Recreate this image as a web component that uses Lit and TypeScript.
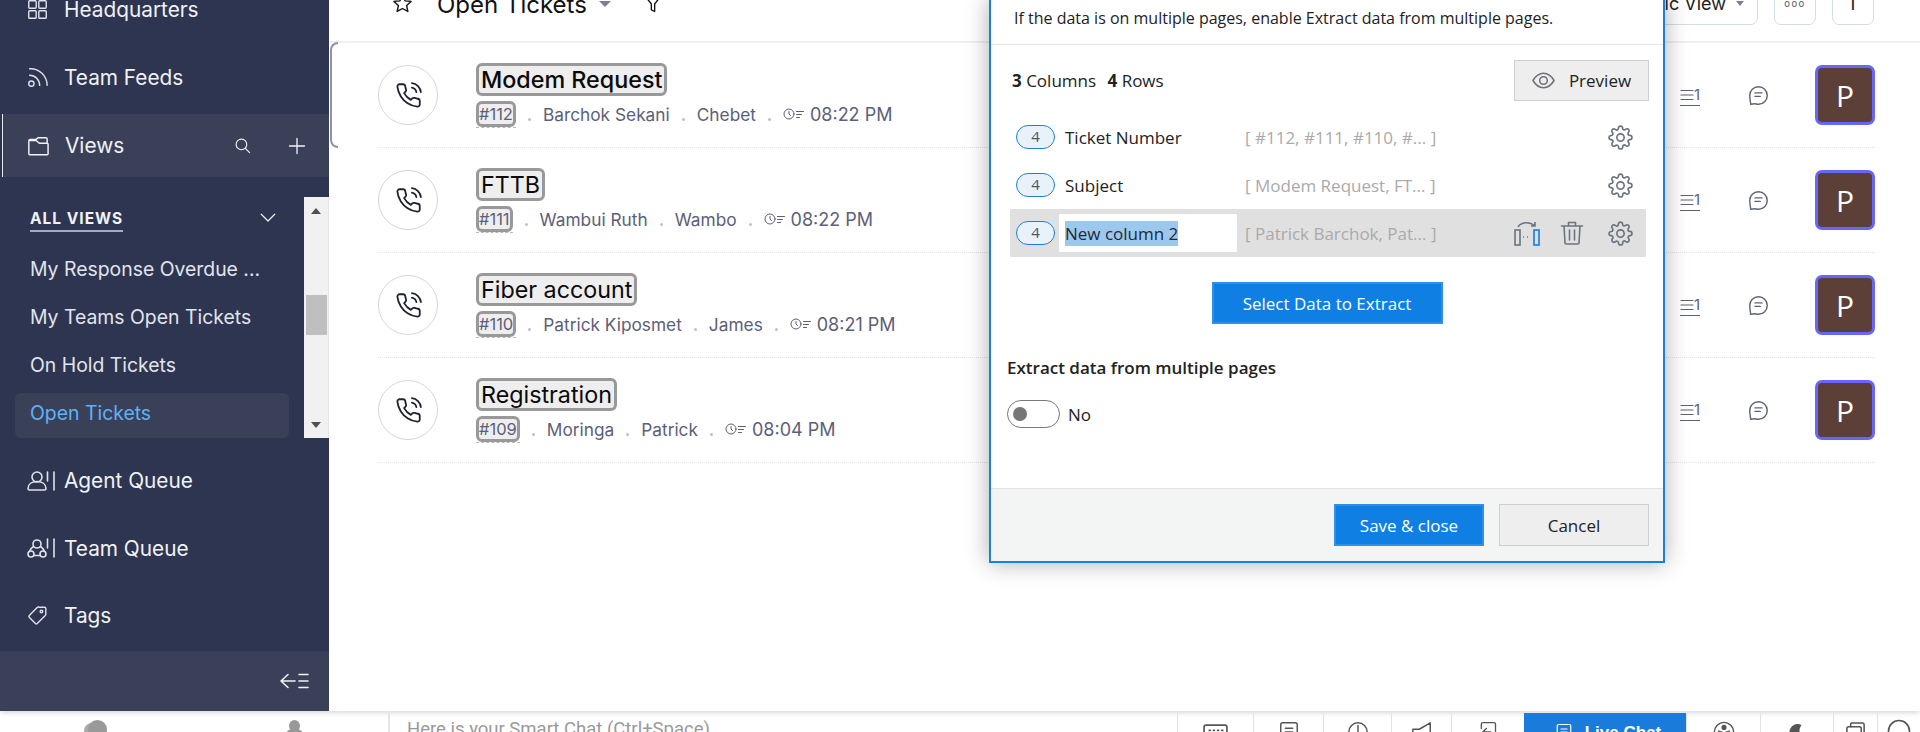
import { LitElement, html, css, svg } from 'lit';
import { customElement } from 'lit/decorators.js';

const tickets = [
  { title: 'Modem Request', id: '#112', contact: 'Barchok Sekani', agent: 'Chebet', time: '08:22 PM', active: true },
  { title: 'FTTB', id: '#111', contact: 'Wambui Ruth', agent: 'Wambo', time: '08:22 PM', active: false },
  { title: 'Fiber account', id: '#110', contact: 'Patrick Kiposmet', agent: 'James', time: '08:21 PM', active: false },
  { title: 'Registration', id: '#109', contact: 'Moringa', agent: 'Patrick', time: '08:04 PM', active: false },
];

const views = ['My Response Overdue ...', 'My Teams Open Tickets', 'On Hold Tickets', 'Open Tickets'];

const columns = [
  { name: 'Ticket Number', sample: '[ #112, #111, #110, #... ]' },
  { name: 'Subject', sample: '[ Modem Request, FT... ]' },
  { name: 'New column 2', sample: '[ Patrick Barchok, Pat... ]', editing: true },
];

const gearPath =
  'M19.4 15a1.65 1.65 0 0 0 .33 1.82l.06.06a2 2 0 0 1 0 2.83 2 2 0 0 1-2.83 0l-.06-.06a1.65 1.65 0 0 0-1.82-.33 1.65 1.65 0 0 0-1 1.51V21a2 2 0 0 1-2 2 2 2 0 0 1-2-2v-.09A1.65 1.65 0 0 0 9 19.4a1.65 1.65 0 0 0-1.82.33l-.06.06a2 2 0 0 1-2.83 0 2 2 0 0 1 0-2.83l.06-.06a1.65 1.65 0 0 0 .33-1.82 1.65 1.65 0 0 0-1.51-1H3a2 2 0 0 1-2-2 2 2 0 0 1 2-2h.09A1.65 1.65 0 0 0 4.6 9a1.65 1.65 0 0 0-.33-1.82l-.06-.06a2 2 0 0 1 0-2.83 2 2 0 0 1 2.83 0l.06.06a1.65 1.65 0 0 0 1.82.33H9a1.65 1.65 0 0 0 1-1.51V3a2 2 0 0 1 2-2 2 2 0 0 1 2 2v.09a1.65 1.65 0 0 0 1 1.51 1.65 1.65 0 0 0 1.82-.33l.06-.06a2 2 0 0 1 2.83 0 2 2 0 0 1 0 2.83l-.06.06a1.65 1.65 0 0 0-.33 1.82V9a1.65 1.65 0 0 0 1.51 1H21a2 2 0 0 1 2 2 2 2 0 0 1-2 2h-.09a1.65 1.65 0 0 0-1.51 1z';

// most icons sit on a 24 box and take their colour from currentColor
const icon = (body: unknown, size = 24, w = 24, h = 24, weight = 1.6) => html`<svg
  width=${(size * w) / 24}
  height=${(size * h) / 24}
  viewBox="0 0 ${w} ${h}"
  fill="none"
  stroke="currentColor"
  stroke-width=${weight}
  stroke-linecap="round"
  stroke-linejoin="round"
>${body}</svg>`;

const icons = {
  grid: svg`<rect x="2" y="2" width="8.5" height="8.5" rx="1"/><rect x="13.5" y="2" width="8.5" height="8.5" rx="1"/><rect x="2" y="13.5" width="8.5" height="8.5" rx="1"/><rect x="13.5" y="13.5" width="8.5" height="8.5" rx="1"/>`,
  feed: svg`<circle cx="5" cy="19" r="3"/><path d="M2 10.5A11.5 11.5 0 0 1 13.5 22M2 3a19 19 0 0 1 20 19" transform="translate(1 -1)"/>`,
  folder: svg`<path d="M2 20V6.500A1.500 1.500 0 0 1 3.500 5h6L12 3h8.500A1.500 1.500 0 0 1 22 4.500V9M2 20.500a1 1 0 0 0 1 1h19a1 1 0 0 0 1-1V10a1 1 0 0 0-1-1h-8.500L10 6H3.500"/>`,
  search: svg`<circle cx="10.500" cy="10.500" r="7.500"/><path d="M16 16l6 6"/>`,
  plus: svg`<path d="M12 3v18M3 12h18"/>`,
  chevron: svg`<path d="M3 7l9 9 9-9"/>`,
  tag: svg`<path d="M13.500 2.500H20a1.500 1.500 0 0 1 1.500 1.500v6.500a2 2 0 0 1-.6 1.400l-9.200 9.200a1.500 1.500 0 0 1-2.100 0l-7-7a1.500 1.500 0 0 1 0-2.100l9-9.200a2 2 0 0 1 1.400-.6z"/><circle cx="16.500" cy="7.500" r="1.500"/>`,
  star: svg`<path d="M12 2.500l2.900 6.300 6.900.8-5.100 4.700 1.400 6.800L12 17.700l-6.100 3.400 1.400-6.800-5.100-4.700 6.900-.8z"/>`,
  funnel: svg`<path d="M3 3h18l-7 9v9l-4-2v-7z"/>`,
  phone: svg`<path d="M15.050 5A5 5 0 0 1 19 8.950M15.050 1A9 9 0 0 1 23 8.940m-1 7.980v3a2 2 0 0 1-2.180 2 19.790 19.790 0 0 1-8.630-3.070 19.500 19.500 0 0 1-6-6 19.790 19.790 0 0 1-3.070-8.670A2 2 0 0 1 4.110 2h3a2 2 0 0 1 2 1.720 12.840 12.840 0 0 0 .700 2.810 2 2 0 0 1-.450 2.110L8.090 9.910a16 16 0 0 0 6 6l1.270-1.270a2 2 0 0 1 2.110-.450 12.840 12.840 0 0 0 2.810.700A2 2 0 0 1 22 16.920z"/>`,
  bubble: svg`<path d="M3 22c0-3-1-5-1-10a10 10 0 1 1 10 10c-2 0-3-.5-4-.5-1.500 0-3 .2-5 .5z"/><path d="M8 9h8M8 13h6"/>`,
  eye: svg`<path d="M1 12c3-5 6.800-7.500 11-7.500S20 7 23 12c-3 5-6.800 7.500-11 7.500S4 17 1 12z"/><circle cx="12" cy="12" r="4"/>`,
  gear: svg`<circle cx="12" cy="12" r="3.500"/><path d=${gearPath}/>`,
  trash: svg`<path d="M1.500 5h21M8.500 5V1.500h7V5M4 5l1 17a1 1 0 0 0 1 1h12a1 1 0 0 0 1-1l1-17M9.500 9v10M14.500 9v10"/>`,
  keyboard: svg`<rect x="1" y="4" width="22" height="17" rx="2"/><path d="M6 9h1M10 9h1M14 9h1M18 9h1"/>`,
  note: svg`<rect x="3" y="2" width="18" height="21" rx="2"/><path d="M8 8h8M8 12h8"/>`,
  clock: svg`<circle cx="12" cy="12" r="10"/><path d="M12 5v8"/>`,
  horn: svg`<path d="M2 9h7l12-7v20L9 16H2z"/>`,
  exit: svg`<path d="M4 9V4a2 2 0 0 1 2-2h13a2 2 0 0 1 2 2v17M15 13H6l4-4M6 13l4 4"/>`,
  face: svg`<circle cx="12" cy="12" r="10.500"/><circle cx="12" cy="7" r="2" fill="currentColor"/><path d="M6 11l6 2 6-2M12 13v4"/>`,
  moon: svg`<path d="M17 3a10 10 0 1 0 5 13c-7 1-10-6-5-13z" fill="currentColor"/>`,
  docs: svg`<rect x="3" y="6" width="15" height="17" rx="2"/><path d="M7 6V3a1 1 0 0 1 1-1h11a2 2 0 0 1 2 2v14M7 13h7M7 17h7"/>`,
  circle: svg`<circle cx="12" cy="12" r="10.500"/>`,
};

// non square ones, drawn on their own box at 1:1
const agentIcon = icon(
  svg`<circle cx="10" cy="6" r="5"/><path d="M1 17.500c0-4.500 4-7 9-7s9 2.500 9 7c0 1-.5 1.500-1.500 1.500h-15c-1 0-1.500-.5-1.500-1.500z"/><path d="M20.500 1v9M27 1v18"/>`,
  24, 28, 20,
);
const teamIcon = icon(
  svg`<circle cx="10" cy="6" r="4"/><circle cx="4" cy="16" r="3"/><circle cx="16" cy="16" r="3"/><path d="M6.500 8.500C4 10 3 11 2.500 13.500M13.500 8.500c2.500 1.500 3.500 2.500 4 5M7 17.500h6"/><path d="M20.500 1v9M27 1v18"/>`,
  24, 28, 20,
);
const collapseIcon = icon(
  svg`<path d="M9 1.500L2 8l7 6.500M2 8h14M20 1.500h9M20 8h9M20 14.500h9"/>`,
  24, 30, 16,
);
const dueIcon = icon(
  svg`<circle cx="6" cy="6" r="5"/><path d="M6 3.500V6l1.500 1.500M13.500 3.500h7M13.500 6.500h5M13.500 9.500h3"/>`,
  24, 22, 12, 1,
);
const linesIcon = icon(svg`<path d="M1 1.500h12M1 6h12M1 10.500h12"/>`, 24, 14, 12, 1.2);

// bottom strip cells, left to right
const stripCells = [
  { w: 76, top: 8, body: icons.keyboard, size: 25 },
  { w: 70, top: 8, body: icons.note, size: 22 },
  { w: 68, top: 8, body: icons.clock, size: 22 },
  { w: 60, top: 8, body: icons.horn, size: 22 },
  { w: 73, top: 8, body: icons.exit, size: 20 },
];
const stripTail = [
  { w: 74, top: 8, body: icons.face, size: 22 },
  { w: 73, top: 10, body: icons.moon, size: 18 },
  { w: 44, top: 8, body: icons.docs, size: 23 },
  { w: 43, top: 6, body: icons.circle, size: 24 },
];

@customElement('app-root')
export class AppRoot extends LitElement {
  static styles = css`
    :host {
      display: block;
      position: relative;
      width: 1920px;
      height: 732px;
      overflow: hidden;
      background: #fff;
      font-family: Inter, 'Liberation Sans', sans-serif;
    }
    svg { display: block; flex: none; }

    .shell { display: flex; height: 711px; box-shadow: 0 1px 6px rgba(0, 0, 0, 0.2); position: relative; }

    /* sidebar */
    .side {
      width: 329px;
      flex: none;
      background: #2e3550;
      color: #f1f2f6;
      display: flex;
      flex-direction: column;
      font-size: 20.800px;
    }
    .nav { display: flex; align-items: center; gap: 16px; height: 67.500px; padding-left: 27px; flex: none; }
    .nav.hq { margin-top: -24px; }
    .nav.tight { gap: 9px; }
    .nav svg { color: #dfe2ea; }
    .views {
      height: 63px;
      margin: 3px 0 20px 2px;
      flex: none;
      background: #3b4059;
      border-left: 1px solid #e9ebf1;
      display: flex;
      align-items: center;
      padding-left: 24px;
      gap: 16px;
    }
    .views .grow { flex: 1; }
    .views .tool { display: flex; align-items: center; gap: 36px; padding-right: 22px; }
    .tree { display: flex; height: 241px; flex: none; margin-bottom: 9px; }
    .tree-list { flex: 1; padding-left: 15px; padding-right: 15px; }
    .tree-head {
      height: 49px;
      box-sizing: border-box;
      display: flex;
      align-items: center;
      justify-content: space-between;
      padding: 0 12px 7px 15px;
      font-size: 15.500px;
      font-weight: 700;
      letter-spacing: 1px;
    }
    .tree-head span { border-bottom: 2px solid #a8abbd; padding-bottom: 2px; margin-top: 4px; }
    .view {
      height: 48px;
      line-height: 47px;
      padding-left: 15px;
      font-size: 19.400px;
      color: #e2e4ec;
      white-space: nowrap;
    }
    .view.on {
      height: 45px;
      margin-top: 3px;
      line-height: 40px;
      background: #3b4059;
      border-radius: 6px;
      color: #5fb1f5;
    }
    .bar {
      width: 25px;
      flex: none;
      background: #f1f1f1;
      border-right: 1px solid #e4e4e4;
      box-sizing: border-box;
      display: flex;
      flex-direction: column;
      align-items: center;
      padding-top: 11px;
    }
    .arrow { width: 0; height: 0; flex: none; border: 5.500px solid transparent; border-top: 0; border-bottom: 6px solid #505050; }
    .arrow.down { border-bottom: 0; border-top: 6px solid #505050; margin-top: 87px; }
    .thumb { width: 21px; height: 40px; flex: none; background: #bfbfbf; margin-top: 81px; }
    .side-foot {
      margin-top: auto;
      height: 60px;
      background: #3b4059;
      display: flex;
      align-items: center;
      justify-content: flex-end;
      padding: 0 20px 0 0;
      flex: none;
    }

    /* ticket list */
    .main { flex: 1; min-width: 0; display: flex; flex-direction: column; }
    .top {
      height: 77px;
      margin-top: -34px;
      flex: none;
      border-bottom: 2px solid #eef0f3;
      box-sizing: border-box;
      display: flex;
      align-items: center;
      padding: 0 46px 0 63px;
      color: #111;
    }
    .top h1 { font-size: 24px; font-weight: 400; margin: 2px 0 0 24px; white-space: nowrap; }
    .caret { width: 0; height: 0; flex: none; border: 6px solid transparent; border-bottom: 0; border-top: 6px solid #7b8092; }
    .top > .caret { margin: 0 32px 0 12px; }
    .top .right { margin-left: auto; display: flex; align-items: center; gap: 16px; }
    .tbtn {
      height: 42px;
      border: 1px solid #d7dde6;
      border-radius: 7px;
      box-sizing: border-box;
      display: flex;
      align-items: center;
      justify-content: center;
      width: 42px;
      font-size: 18px;
      color: #222;
    }
    .tbtn.view-btn { width: auto; padding: 0 13px; gap: 10px; white-space: nowrap; }
    .tbtn.view-btn .caret { border-width: 5px 4.500px 0; }
    .tbtn.dots { letter-spacing: 1.500px; font-size: 9.500px; color: #555; }

    .row {
      position: relative;
      height: 105px;
      flex: none;
      box-sizing: border-box;
      margin-left: 49px;
      margin-right: 45px;
      border-bottom: 1px dotted #dfe2e6;
      display: flex;
      align-items: center;
    }
    .row.active::before {
      content: '';
      position: absolute;
      left: -48px;
      top: -1px;
      bottom: -1px;
      width: 6px;
      border: 2px solid #8a93a8;
      border-right: 0;
      border-radius: 8px 0 0 8px;
    }
    .avatar-call {
      width: 60px;
      height: 60px;
      flex: none;
      border-radius: 50%;
      border: 1px solid #d3d5e4;
      box-sizing: border-box;
      display: flex;
      align-items: center;
      justify-content: center;
      color: #1f2330;
      margin-right: 38px;
    }
    .body { display: flex; flex-direction: column; align-items: flex-start; gap: 5px; }
    .title {
      height: 33px;
      box-sizing: border-box;
      border: 3px solid #999;
      border-radius: 6px;
      background: #eee;
      padding: 0 2px;
      font-size: 23.300px;
      line-height: 27px;
      color: #0a0a0a;
      white-space: nowrap;
    }
    .row.active .title { font-weight: 500; }
    .meta { display: flex; align-items: center; gap: 12px; font-size: 17.300px; color: #5b6078; white-space: nowrap; height: 26px; }
    .tid {
      position: relative;
      height: 26px;
      box-sizing: border-box;
      border: 3px solid #999;
      border-radius: 6px;
      background: #eee;
      font-size: 16.500px;
      line-height: 20px;
    }
    .tid::after {
      content: '';
      position: absolute;
      left: -3px;
      right: -3px;
      bottom: -4px;
      border-bottom: 1px dashed #b4b8c8;
    }
    .dot { width: 3px; height: 3px; background: #b9c0d6; border-radius: 50%; margin-top: 10px; }
    .when { display: flex; align-items: center; gap: 5px; font-size: 18px; }
    .count {
      position: absolute;
      left: 1302px;
      border-bottom: 1px solid #5d6175;
      display: flex;
      align-items: center;
      font-size: 15px;
      color: #5d6175;
      height: 21px;
      width: 20px;
      gap: 0;
    }
    .bubble { position: absolute; left: 1370px; color: #5d6175; }
    .avatar {
      position: absolute;
      right: 0;
      width: 60px;
      height: 60px;
      box-sizing: border-box;
      border: 3px solid #6666ff;
      border-radius: 7px;
      background: #5c4037;
      color: #fff;
      font-size: 30px;
      font-family: 'Open Sans', sans-serif;
      display: flex;
      align-items: center;
      justify-content: center;
    }

    /* extract dialog */
    .dialog {
      position: absolute;
      left: 989px;
      top: -2px;
      width: 676px;
      height: 565px;
      box-sizing: border-box;
      border: 2px solid #1d7fdc;
      background: #fff;
      box-shadow: 0 0 22px rgba(0, 0, 0, 0.32);
      display: flex;
      flex-direction: column;
      font-family: 'Open Sans', 'Liberation Sans', sans-serif;
      font-size: 17px;
      color: #222;
    }
    .dlg-head {
      height: 44px;
      flex: none;
      box-sizing: content-box;
      border-bottom: 1px solid #e3e3e3;
      padding-left: 23px;
      line-height: 36px;
      font-size: 16px;
      white-space: nowrap;
    }
    .counts { display: flex; align-items: center; justify-content: space-between; padding: 15px 14px 12px 21px; }
    .counts b { font-weight: 700; }
    .counts span { margin-right: 7px; }
    .btn {
      border: 1px solid #cfcfcf;
      background: #eeeeef;
      color: #222;
      font: inherit;
      box-sizing: border-box;
      display: flex;
      align-items: center;
      justify-content: center;
    }
    .btn.primary { background: #0f7fe3; border: 2px solid #2f90e8; color: #fff; }
    .preview { width: 135px; height: 41px; gap: 14px; }
    .preview svg { color: #6c7078; }
    .col {
      height: 48px;
      margin: 0 17px 0 19px;
      display: flex;
      align-items: center;
      padding-left: 6px;
      padding-right: 13px;
    }
    .col.editing { background: #e0e0e0; }
    .pill {
      width: 39px;
      height: 24px;
      box-sizing: border-box;
      border: 1.500px solid #1d7fdc;
      border-radius: 12px;
      background: #e9f2fb;
      color: #4b5563;
      font-size: 15px;
      text-align: center;
      line-height: 20px;
      flex: none;
      margin-right: 10px;
    }
    .name { width: 180px; flex: none; white-space: nowrap; }
    .col.editing .name {
      width: 178px;
      height: 38px;
      margin: 0 8px 0 -6px;
      background: #fff;
      box-sizing: border-box;
      padding-left: 6px;
      display: flex;
      align-items: center;
    }
    .name mark { background: #9cc8ee; color: #1f2937; padding: 1px 0; }
    .sample { color: #aaa; flex: 1; white-space: nowrap; }
    .tools { display: flex; align-items: center; gap: 24px; color: #6c7480; }
    .move { margin-right: -4px; }
    .extract { width: 231px; height: 42px; margin: 25px auto 0; }
    .multi { margin: 32px 0 0 16px; font-weight: 600; line-height: 24px; }
    .toggle { display: flex; align-items: center; gap: 8px; margin: 20px 0 0 16px; }
    .switch {
      width: 53px;
      height: 28px;
      box-sizing: border-box;
      border: 1.500px solid #7a7a7a;
      border-radius: 14px;
      display: flex;
      align-items: center;
      padding-left: 5px;
    }
    .switch i { width: 14px; height: 14px; border-radius: 50%; background: #777; }
    .dlg-foot {
      margin-top: auto;
      height: 73px;
      flex: none;
      box-sizing: border-box;
      border-top: 1px solid #e3e3e3;
      background: #f3f4f4;
      display: flex;
      justify-content: flex-end;
      align-items: center;
      gap: 15px;
      padding: 0 14px 0 0;
    }
    .dlg-foot .btn { width: 150px; height: 42px; }

    /* bottom strip, only its top edge is on screen */
    .strip { height: 21px; display: flex; position: relative; overflow: hidden; color: #555; }
    .strip-left { width: 390px; flex: none; border-right: 2px solid #e6e6e6; box-sizing: border-box; position: relative; }
    .chat { flex: 1; padding: 7px 0 0 17px; font-family: Roboto, sans-serif; font-size: 18.500px; color: #9a9a9a; white-space: nowrap; }
    .blob { position: absolute; background: #999; border-radius: 50%; }
    .blob.chat-back { left: 84px; top: 12px; width: 16px; height: 16px; background: #aaa; }
    .blob.chat-front { left: 88px; top: 9px; width: 19px; height: 19px; }
    .blob.head { left: 289px; top: 9px; width: 11px; height: 12px; }
    .blob.body { left: 286px; top: 18px; width: 17px; height: 10px; border-radius: 6px 6px 0 0; }
    .strip-right { display: flex; margin-top: 2px; }
    .cell {
      border-left: 1px solid #e2e2e2;
      display: flex;
      justify-content: center;
      box-sizing: border-box;
    }
    .live {
      width: 162px;
      flex: none;
      background: #1a7bdb;
      color: #fff;
      display: flex;
      justify-content: center;
      gap: 12px;
      padding: 10px 0 0 6px;
      box-sizing: border-box;
      font-family: 'Liberation Sans', sans-serif;
      font-size: 17px;
      font-weight: 700;
    }
  `;

  private renderTicket(t: (typeof tickets)[number]) {
    return html`
      <div class="row ${t.active ? 'active' : ''}">
        <div class="avatar-call">${icon(icons.phone, 27)}</div>
        <div class="body">
          <div class="title">${t.title}</div>
          <div class="meta">
            <span class="tid">${t.id}</span>
            <i class="dot"></i>
            <span>${t.contact}</span>
            <i class="dot"></i>
            <span>${t.agent}</span>
            <i class="dot"></i>
            <span class="when">${dueIcon}${t.time}</span>
          </div>
        </div>
        <div class="count">${linesIcon}1</div>
        <div class="bubble">${icon(icons.bubble, 21)}</div>
        <div class="avatar">P</div>
      </div>
    `;
  }

  private renderColumn(c: (typeof columns)[number]) {
    return html`
      <div class="col ${c.editing ? 'editing' : ''}">
        <span class="pill">4</span>
        <span class="name">${c.editing ? html`<mark>${c.name}</mark>` : c.name}</span>
        <span class="sample">${c.sample}</span>
        <div class="tools">
          ${c.editing
            ? html`
                <svg class="move" width="26" height="26" viewBox="0 0 26 26" fill="none" stroke="#6c7480" stroke-width="1.600">
                  <rect x="1" y="10" width="5" height="15" />
                  <rect x="20" y="10" width="5" height="15" stroke="#0f7fe3" />
                  <path d="M4 7c3-5 11-6 17-1M21 2v4h-4" />
                  <path d="M9 17h1M13 17h1" />
                </svg>
                ${icon(icons.trash, 24)}
              `
            : ''}
          ${icon(icons.gear, 25)}
        </div>
      </div>
    `;
  }

  private renderCell(c: (typeof stripCells)[number]) {
    return html`<div class="cell" style="width:${c.w}px;padding-top:${c.top}px">${icon(c.body, c.size)}</div>`;
  }

  render() {
    return html`
      <div class="shell">
        <aside class="side">
          <div class="nav hq">${icon(icons.grid, 21)}<span>Headquarters</span></div>
          <div class="nav">${icon(icons.feed, 21)}<span>Team Feeds</span></div>
          <div class="views">
            ${icon(icons.folder, 22)}<span class="grow">Views</span>
            <div class="tool">${icon(icons.search, 17)}${icon(icons.plus, 20)}</div>
          </div>
          <div class="tree">
            <div class="tree-list">
              <div class="tree-head"><span>ALL VIEWS</span>${icon(icons.chevron, 18)}</div>
              ${views.map(
                (v) => html`<div class="view ${v === 'Open Tickets' ? 'on' : ''}">${v}</div>`,
              )}
            </div>
            <div class="bar">
              <i class="arrow"></i>
              <i class="thumb"></i>
              <i class="arrow down"></i>
            </div>
          </div>
          <div class="nav tight">${agentIcon}<span>Agent Queue</span></div>
          <div class="nav tight">${teamIcon}<span>Team Queue</span></div>
          <div class="nav">${icon(icons.tag, 21)}<span>Tags</span></div>
          <div class="side-foot">${collapseIcon}</div>
        </aside>

        <main class="main">
          <div class="top">
            ${icon(icons.star, 21)}
            <h1>Open Tickets</h1>
            <i class="caret"></i>
            ${icon(icons.funnel, 20)}
            <div class="right">
              <div class="tbtn view-btn">Classic View <i class="caret"></i></div>
              <div class="tbtn dots">ooo</div>
              <div class="tbtn">I</div>
            </div>
          </div>
          ${tickets.map((t) => this.renderTicket(t))}
        </main>
      </div>

      <div class="strip">
        <div class="strip-left">
          <i class="blob chat-back"></i>
          <i class="blob chat-front"></i>
          <i class="blob head"></i>
          <i class="blob body"></i>
        </div>
        <div class="chat">Here is your Smart Chat (Ctrl+Space)</div>
        <div class="strip-right">
          ${stripCells.map((c) => this.renderCell(c))}
          <div class="live">${icon(icons.note, 18)}<span>Live Chat</span></div>
          ${stripTail.map((c) => this.renderCell(c))}
        </div>
      </div>

      <section class="dialog">
        <div class="dlg-head">If the data is on multiple pages, enable Extract data from multiple pages.</div>
        <div class="counts">
          <div><b>3</b> <span>Columns</span> <b>4</b> Rows</div>
          <div class="btn preview">${icon(icons.eye, 23)}Preview</div>
        </div>
        ${columns.map((c) => this.renderColumn(c))}
        <div class="btn primary extract">Select Data to Extract</div>
        <div class="multi">Extract data from multiple pages</div>
        <div class="toggle"><div class="switch"><i></i></div>No</div>
        <div class="dlg-foot">
          <div class="btn primary">Save &amp; close</div>
          <div class="btn">Cancel</div>
        </div>
      </section>
    `;
  }
}
